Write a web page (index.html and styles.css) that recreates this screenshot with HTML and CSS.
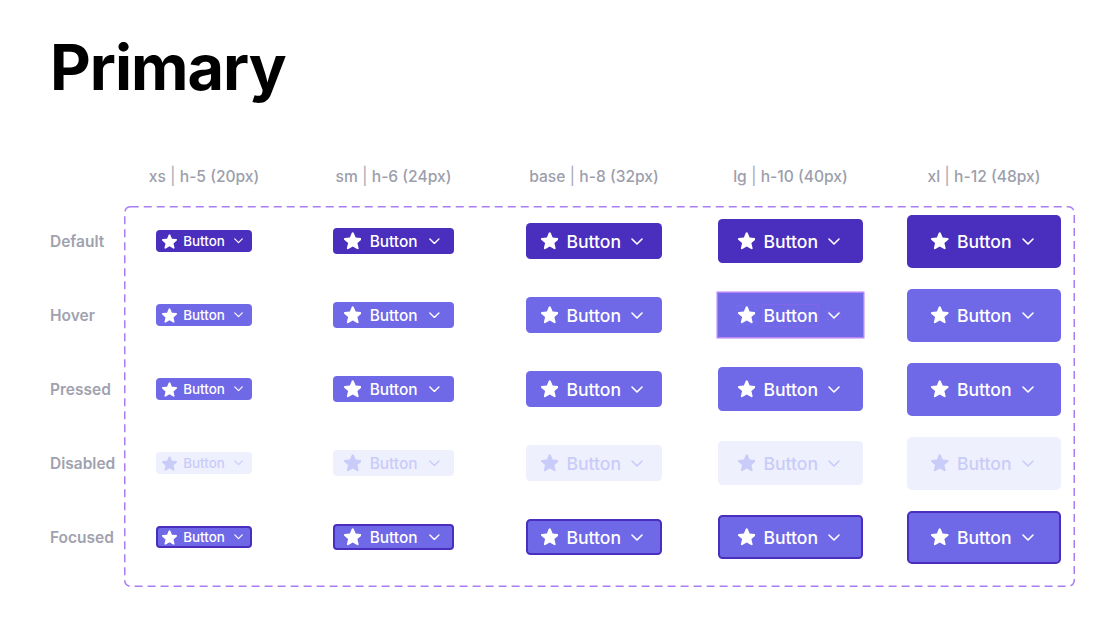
FILE: index.html
```html
<!DOCTYPE html>
<html lang="en">
<head>
<meta charset="utf-8">
<title>Primary buttons</title>
<link rel="stylesheet" href="styles.css">
</head>
<body>
<main class="page">
  <h1 class="title">Primary</h1>
  <div class="heads">
    <div class="head">xs <span class="sep">|</span> h-5 (20px)</div>
    <div class="head">sm <span class="sep">|</span> h-6 (24px)</div>
    <div class="head">base <span class="sep">|</span> h-8 (32px)</div>
    <div class="head">lg <span class="sep">|</span> h-10 (40px)</div>
    <div class="head">xl <span class="sep">|</span> h-12 (48px)</div>
  </div>
  <div class="body">
    <div class="labels">
      <div class="label">Default</div>
      <div class="label">Hover</div>
      <div class="label">Pressed</div>
      <div class="label">Disabled</div>
      <div class="label">Focused</div>
    </div>
    <div class="box" id="box"></div>
  </div>
</main>
<script src="app.js"></script>
</body>
</html>
```

FILE: app.js
```js
const sizes = ["xs", "sm", "base", "lg", "xl"];
const states = ["default", "hover", "pressed", "disabled", "focused"];
const star = '<svg class="star" viewBox="1.8 2.2 16.4 16.2" aria-hidden="true"><path fill="currentColor" d="M10.868 2.884c-.321-.772-1.415-.772-1.736 0l-1.83 4.401-4.753.381c-.833.067-1.171 1.107-.536 1.651l3.62 3.102-1.106 4.637c-.194.813.691 1.456 1.405 1.02L10 15.591l4.069 2.485c.713.436 1.598-.207 1.404-1.020l-1.106-4.637 3.620-3.102c.635-.544.297-1.584-.536-1.650l-4.752-.382-1.831-4.401z"/></svg>';
const chev = '<svg class="chev" viewBox="0 0 12 7" aria-hidden="true"><polyline points="1,1 6,6 11,1" fill="none" stroke="currentColor" stroke-width="1.6" stroke-linecap="round" stroke-linejoin="round"/></svg>';
const box = document.getElementById("box");
states.forEach(function (st) {
  sizes.forEach(function (sz) {
    const cell = document.createElement("div");
    cell.className = "cell";
    const b = document.createElement("button");
    b.className = "btn " + sz + " " + st + (st === "hover" && sz === "lg" ? " selected" : "");
    b.innerHTML = star + '<span class="txt">Button</span>' + chev;
    cell.appendChild(b);
    box.appendChild(cell);
  });
});
```

FILE: styles.css
```css
* { box-sizing: border-box; }
body {
  margin: 0;
  background: #ffffff;
  font-family: Inter, "Noto Sans", sans-serif;
}
.page {
  padding: 36px 0 0 50px;
}
.title {
  margin: 0;
  font-size: 63px;
  line-height: 63px;
  font-weight: 700;
  letter-spacing: -1px;
  color: #000000;
}
.heads {
  margin: 67px 0 0 74px;
  display: grid;
  grid-template-columns: 160px 219px 182px 211px 176px;
  height: 20px;
}
.head {
  text-align: center;
  font-size: 15.6px;
  line-height: 20px;
  font-weight: 500;
  color: #9c9eab;
  white-space: nowrap;
}
.sep {
  color: #a9abb8;
  font-weight: 400;
  font-size: 17px;
}
.body {
  margin-top: 20px;
  display: flex;
}
.labels {
  width: 74px;
  padding-top: 8px;
  display: flex;
  flex-direction: column;
  gap: 20px;
}
.label {
  height: 54px;
  display: flex;
  align-items: center;
  font-size: 15.5px;
  font-weight: 600;
  color: #a0a2af;
}
.box {
  width: 951px;
  height: 381px;
  padding: 8px 0 23px;
  display: grid;
  grid-template-columns: 160px 219px 182px 211px 176px;
  grid-auto-rows: 54px;
  row-gap: 20px;
  background: url("data:image/svg+xml,%3Csvg xmlns='http://www.w3.org/2000/svg' width='951' height='381'%3E%3Crect x='0.75' y='0.75' width='949.5' height='379.5' rx='6' fill='none' stroke='%23a97df4' stroke-width='1.5' stroke-dasharray='8 5'/%3E%3C/svg%3E") no-repeat;
}
.cell {
  display: flex;
  align-items: center;
  justify-content: center;
}
.btn {
  display: flex;
  align-items: center;
  border: 0;
  margin: 0;
  font-family: Inter, "Noto Sans", sans-serif;
  font-weight: 500;
  color: #ffffff;
  cursor: pointer;
  white-space: nowrap;
}
.btn .star { display: block; flex: none; }
.btn .chev { display: block; flex: none; }
.btn .txt { display: block; }

.btn.xs { height: 22px; padding: 0 9px 0 6.5px; border-radius: 4px; font-size: 13.4px; gap: 6px; }
.btn.xs .star { width: 15px; height: 15px; }
.btn.xs .chev { width: 9px; height: 5.5px; margin-left: 3.5px; }

.btn.sm { height: 26px; padding: 0 14px 0 10.5px; border-radius: 4px; font-size: 15.4px; gap: 8.5px; }
.btn.sm .star { width: 17.5px; height: 17.5px; }
.btn.sm .chev { width: 10.8px; height: 6.4px; margin-left: 3px; }

.btn.base, .btn.lg, .btn.xl { font-size: 17.6px; gap: 8px; }
.btn.base .star, .btn.lg .star, .btn.xl .star { width: 17.5px; height: 17.5px; }
.btn.base .chev, .btn.lg .chev, .btn.xl .chev { width: 12px; height: 7px; margin-left: 2px; }

.btn.base { height: 36px; padding: 0 19px 0 15px; border-radius: 4.5px; }
.btn.lg { height: 44px; padding: 0 23px 0 20px; border-radius: 4.5px; }
.btn.xl { height: 53px; padding: 0 27px 0 24px; border-radius: 5px; }

.btn.default { background: #4a2ebe; }
.btn.hover { background: #6f68e7; }
.btn.pressed { background: #6f68e7; }
.btn.disabled { background: #eff0fe; color: #c9ccf8; cursor: default; }
.btn.focused { background: #6f68e7; border: 2px solid #4a2ebe; }
.btn.focused.xs { padding: 0 7px 0 4.5px; }
.btn.focused.sm { padding: 0 12px 0 8.5px; }
.btn.focused.base { padding: 0 17px 0 13px; }
.btn.focused.lg { padding: 0 21px 0 18px; }
.btn.focused.xl { padding: 0 25px 0 22px; }

.btn.selected {
  border-radius: 0;
  box-shadow: 0 0 0 1.5px #b682f6;
}
.btn.selected .star,
.btn.selected .txt,
.btn.selected .chev {
  outline: 1px dotted rgba(150, 110, 245, 0.55);
}
```
